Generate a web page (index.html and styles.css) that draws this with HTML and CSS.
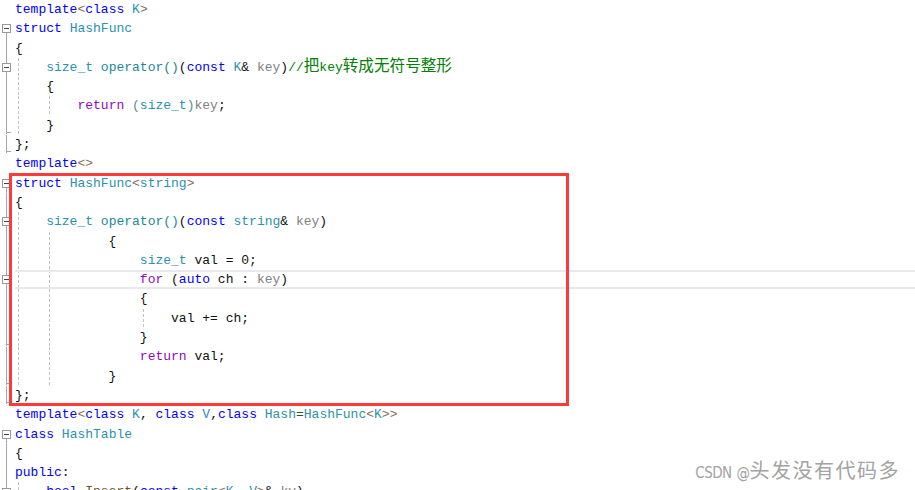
FILE: index.html
```html
<!DOCTYPE html>
<html lang="zh-CN">
<head>
  <meta charset="UTF-8">
  <title>HashFunc</title>
  <link rel="stylesheet" href="styles.css">
</head>
<body>
  <div class="editor">
    <div class="line"><span class="gut"></span><span class="code"><span class="k">template</span><span class="a">&lt;</span><span class="k">class</span> <span class="t">K</span><span class="a">&gt;</span></span></div>
    <div class="line"><span class="gut fold"><i class="box"></i></span><span class="code"><span class="k">struct</span> <span class="t">HashFunc</span></span></div>
    <div class="line"><span class="gut bar"></span><span class="code">{</span></div>
    <div class="line"><span class="gut fold mid"><i class="box"></i></span><span class="code g1">    <span class="t">size_t</span> <span class="f">operator()</span>(<span class="k">const</span> <span class="t">K</span>&amp; <span class="p">key</span>)<span class="c">//<span class="cjk">把</span>key<span class="cjk">转成无符号整形</span></span></span></div>
    <div class="line"><span class="gut bar"></span><span class="code g1">    {</span></div>
    <div class="line"><span class="gut bar"></span><span class="code g2">        <span class="r">return</span> <span class="q">(</span><span class="t">size_t</span><span class="q">)</span><span class="p">key</span>;</span></div>
    <div class="line"><span class="gut end"></span><span class="code g1">    }</span></div>
    <div class="line"><span class="gut end"></span><span class="code">};</span></div>
    <div class="line"><span class="gut"></span><span class="code"><span class="k">template</span><span class="a">&lt;&gt;</span></span></div>
    <div class="line"><span class="gut fold"><i class="box"></i></span><span class="code"><span class="k">struct</span> <span class="t">HashFunc</span><span class="a">&lt;</span><span class="t">string</span><span class="a">&gt;</span></span></div>
    <div class="line"><span class="gut bar"></span><span class="code">{</span></div>
    <div class="line"><span class="gut fold mid"><i class="box"></i></span><span class="code g1">    <span class="t">size_t</span> <span class="f">operator()</span>(<span class="k">const</span> <span class="t">string</span>&amp; <span class="p">key</span>)</span></div>
    <div class="line"><span class="gut bar"></span><span class="code g2">            {</span></div>
    <div class="line"><span class="gut bar"></span><span class="code g2">                <span class="t">size_t</span> val = 0;</span></div>
    <div class="line"><span class="gut fold mid"><i class="box"></i></span><span class="code g2 current">                <span class="r">for</span> (<span class="k">auto</span> ch : <span class="p">key</span>)</span></div>
    <div class="line"><span class="gut bar"></span><span class="code g2">                {</span></div>
    <div class="line"><span class="gut bar"></span><span class="code g3">                    val += ch;</span></div>
    <div class="line"><span class="gut end"></span><span class="code g2">                }</span></div>
    <div class="line"><span class="gut bar"></span><span class="code g2">                <span class="r">return</span> val;</span></div>
    <div class="line"><span class="gut end"></span><span class="code g2">            }</span></div>
    <div class="line"><span class="gut end"></span><span class="code">};</span></div>
    <div class="line"><span class="gut"></span><span class="code"><span class="k">template</span><span class="a">&lt;</span><span class="k">class</span> <span class="t">K</span>, <span class="k">class</span> <span class="t">V</span>,<span class="k">class</span> <span class="t">Hash</span><span class="e">=</span><span class="t">HashFunc</span><span class="a">&lt;</span><span class="t">K</span><span class="a">&gt;&gt;</span></span></div>
    <div class="line"><span class="gut fold"><i class="box"></i></span><span class="code"><span class="k">class</span> <span class="t">HashTable</span></span></div>
    <div class="line"><span class="gut bar"></span><span class="code">{</span></div>
    <div class="line"><span class="gut bar"></span><span class="code"><span class="k">public</span>:</span></div>
    <div class="line"><span class="gut fold mid"><i class="box"></i></span><span class="code g1">    <span class="k">bool</span> <span class="m">Insert</span>(<span class="k">const</span> <span class="t">pair</span><span class="a">&lt;</span><span class="t">K</span>, <span class="t">V</span><span class="a">&gt;</span>&amp; <span class="p">kv</span>)</span></div>

    <div class="mark"></div>
    <div class="watermark"><span class="wm-latin">CSDN @</span>头发没有代码多</div>
  </div>
</body>
</html>
```

FILE: styles.css
```css
html, body {
  margin: 0;
  padding: 0;
  background: #fff;
}
.editor {
  position: relative;
  width: 915px;
  height: 490px;
  overflow: hidden;
  font-family: "Liberation Mono", "DejaVu Sans Mono", monospace;
  font-size: 13px;
  color: #111;
}
.line {
  display: grid;
  grid-template-columns: 15px 1fr;
  height: 19.3px;
  line-height: 19.3px;
}
.code {
  white-space: pre;
}

/* gutter: outline markers */
.gut {
  display: flex;
  align-items: center;
}
.bar {
  background: linear-gradient(#a5a5a5, #a5a5a5) 6px 0 / 1px 100% no-repeat;
}
.end {
  background:
    linear-gradient(#a5a5a5, #a5a5a5) 6px 0 / 1px calc(100% - 1px) no-repeat,
    linear-gradient(#a5a5a5, #a5a5a5) 6px calc(100% - 2px) / 5px 1px no-repeat;
}
.fold {
  background: linear-gradient(#a5a5a5, #a5a5a5) 6px 100% / 1px 50% no-repeat;
}
.fold.mid {
  background: linear-gradient(#a5a5a5, #a5a5a5) 6px 0 / 1px 100% no-repeat;
}
.box {
  display: block;
  width: 9px;
  height: 9px;
  margin-left: 2px;
  box-sizing: border-box;
  border: 1px solid #9a9a9a;
  background: linear-gradient(#444, #444) center / 5px 1px no-repeat, #fff;
}

/* indent guides */
.g1 {
  background: repeating-linear-gradient(#c2c2c2 0 3px, transparent 3px 5px) 3px 0 / 1px 100% no-repeat;
}
.g2 {
  background:
    repeating-linear-gradient(#c2c2c2 0 3px, transparent 3px 5px) 3px 0 / 1px 100% no-repeat,
    repeating-linear-gradient(#c2c2c2 0 3px, transparent 3px 5px) 34px 0 / 1px 100% no-repeat;
}
.g3 {
  background:
    repeating-linear-gradient(#c2c2c2 0 3px, transparent 3px 5px) 3px 0 / 1px 100% no-repeat,
    repeating-linear-gradient(#c2c2c2 0 3px, transparent 3px 5px) 34px 0 / 1px 100% no-repeat,
    repeating-linear-gradient(#c2c2c2 0 3px, transparent 3px 5px) 128px 0 / 1px 100% no-repeat;
}
.current {
  box-shadow: inset 0 2px #e8e8f0, inset 0 -2px #e8e8f0;
}

/* syntax colours */
.k { color: #0000ff; }
.t { color: #2b91af; }
.f { color: #1a8797; }
.p { color: #808080; }
.r { color: #8f08c4; }
.c { color: #008000; }
.a { color: #8a6d55; }
.q { color: #5a8a98; }
.e { color: #2f4f2f; }
.m { color: #74531f; }
.cjk {
  font-family: "Noto Sans CJK SC", sans-serif;
  font-size: 15.6px;
  line-height: 0;
}

/* annotation overlay */
.mark {
  position: absolute;
  left: 9px;
  top: 173px;
  width: 560px;
  height: 233px;
  box-sizing: border-box;
  border: 3px solid #fb3a3a;
}
.watermark {
  position: absolute;
  right: 15px;
  top: 456px;
  font-family: "Noto Sans CJK SC", sans-serif;
  font-size: 20px;
  line-height: 28px;
  color: #a3a3a3;
  letter-spacing: 1.5px;
  text-shadow: 0 0 1px #fff;
}
.wm-latin {
  font-family: "DejaVu Sans", sans-serif;
  font-stretch: condensed;
  font-size: 15px;
  letter-spacing: -0.5px;
  word-spacing: 1px;
}
```
